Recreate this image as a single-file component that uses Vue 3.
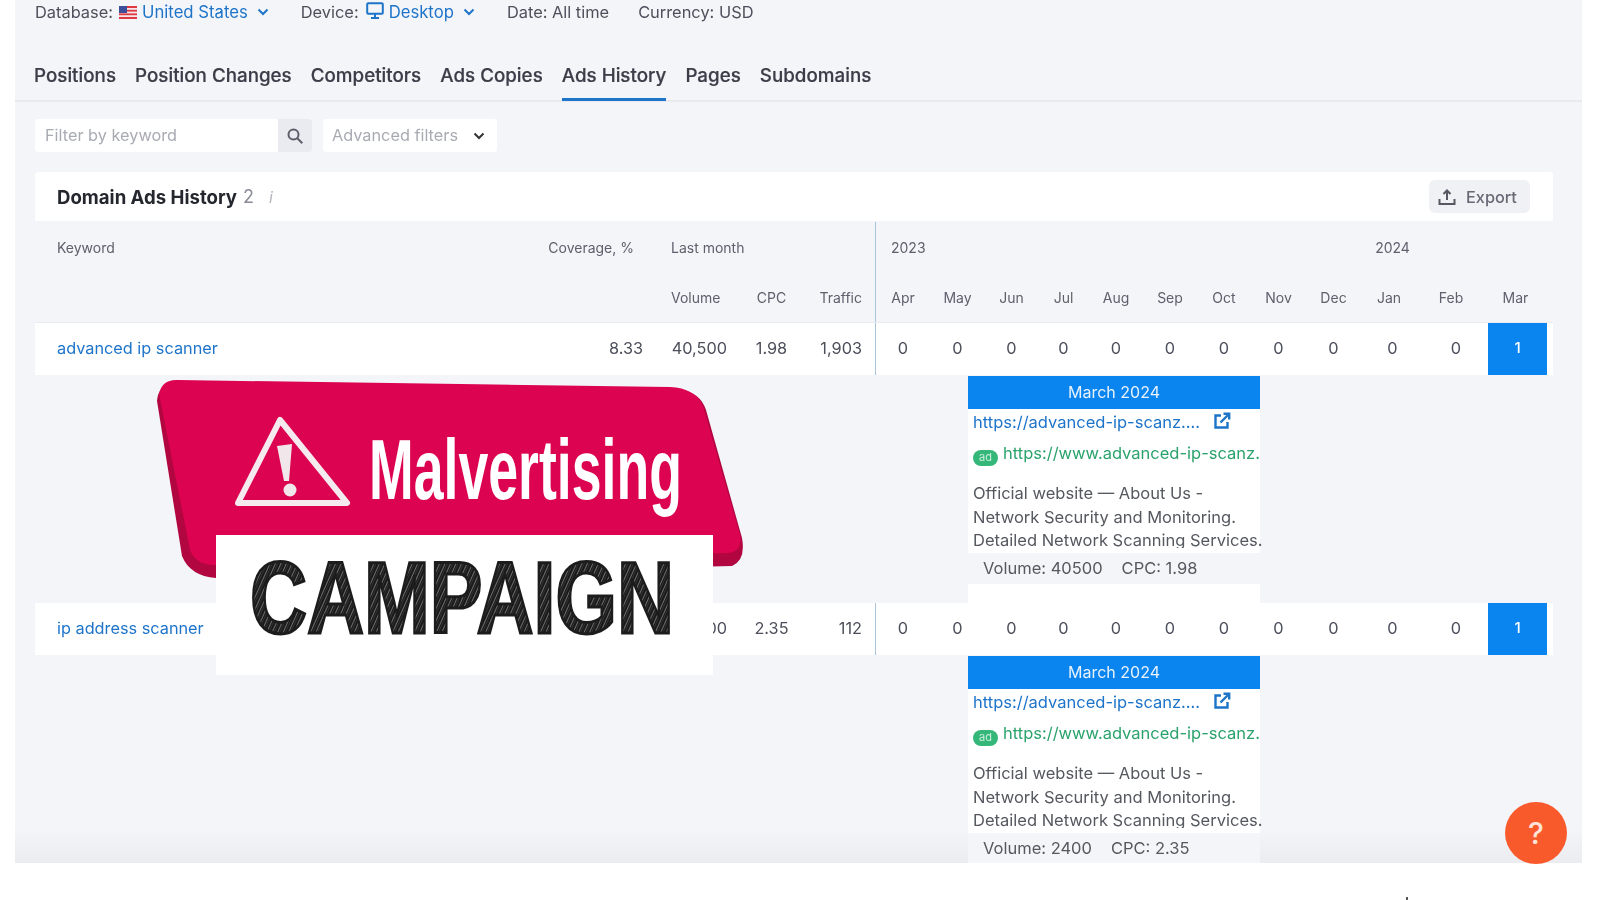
<script setup>
const tabs = ['Positions', 'Position Changes', 'Competitors', 'Ads Copies', 'Ads History', 'Pages', 'Subdomains']
const months = ['Apr', 'May', 'Jun', 'Jul', 'Aug', 'Sep', 'Oct', 'Nov', 'Dec', 'Jan', 'Feb', 'Mar']
const rows = [
  { kw: 'advanced ip scanner', cov: '8.33', vol: '40,500', cpc: '1.98', tr: '1,903', volume: '40500', cpcRaw: '1.98', gap: 'tall' },
  { kw: 'ip address scanner', cov: '', vol: '2,400', cpc: '2.35', tr: '112', volume: '2400', cpcRaw: '2.35', gap: 'short' }
]
</script>

<template>
  <div class="page">
    <main class="panel">
      <header class="meta">
        <span>Database:</span>
        <svg class="flag" viewBox="0 0 18 13">
          <rect width="18" height="13" fill="#e0393e" />
          <rect y="2" width="18" height="1.8" fill="#f4e6ea" />
          <rect y="5.6" width="18" height="1.8" fill="#f4e6ea" />
          <rect y="9.2" width="18" height="1.8" fill="#f4e6ea" />
          <rect width="8" height="7" fill="#3d4f9a" />
        </svg>
        <a class="link">United States</a>
        <svg class="chev" viewBox="0 0 12 8"><path d="M1.5 1.5 6 6l4.5-4.5" /></svg>
        <span class="m-device">Device:</span>
        <svg class="monitor" viewBox="0 0 18 18">
          <rect x="1.2" y="1.2" width="15.6" height="10.6" rx="1" />
          <path d="M9 12v3M5 16h8" />
        </svg>
        <a class="link">Desktop</a>
        <svg class="chev" viewBox="0 0 12 8"><path d="M1.5 1.5 6 6l4.5-4.5" /></svg>
        <span class="m-date">Date: All time</span>
        <span class="m-cur">Currency: USD</span>
      </header>

      <nav class="tabs">
        <a v-for="t in tabs" :key="t" class="tab" :class="{ active: t === 'Ads History' }">{{ t }}</a>
      </nav>

      <section class="filters">
        <div class="search">
          <span class="ph">Filter by keyword</span>
          <span class="search-btn">
            <svg viewBox="0 0 18 18"><circle cx="7.5" cy="7.5" r="5" /><path d="m11.3 11.3 5 5" /></svg>
          </span>
        </div>
        <div class="adv">
          <span class="ph">Advanced filters</span>
          <svg class="chev dark" viewBox="0 0 12 8"><path d="M1.5 1.5 6 6l4.5-4.5" /></svg>
        </div>
      </section>

      <section class="card-head">
        <h2>Domain Ads History</h2>
        <span class="count">2</span>
        <span class="info">i</span>
        <button class="export">
          <svg viewBox="0 0 18 18"><path d="M9 12V2.5M5.5 6 9 2.5 12.5 6M1.5 11v5h15v-5" /></svg>
          Export
        </button>
      </section>

      <div class="grid head top">
        <div class="pl">Keyword</div>
        <div class="cov-h">Coverage, %</div>
        <div class="last">Last month</div>
        <div></div>
        <div></div>
        <div class="first year">2023</div>
        <div></div><div></div><div></div><div></div><div></div><div></div><div></div><div></div>
        <div class="ctr">2024</div>
      </div>
      <div class="grid head sub">
        <div></div>
        <div></div>
        <div class="last">Volume</div>
        <div class="ctr">CPC</div>
        <div class="tr">Traffic</div>
        <div v-for="(m, i) in months" :key="m" class="ctr" :class="['m-' + m, { first: i === 0 }]">{{ m }}</div>
      </div>

      <template v-for="r in rows" :key="r.kw">
        <div class="grid data">
          <a class="kw">{{ r.kw }}</a>
          <div class="cov">{{ r.cov }}</div>
          <div class="vol">{{ r.vol }}</div>
          <div class="ctr">{{ r.cpc }}</div>
          <div class="tr">{{ r.tr }}</div>
          <div v-for="(m, i) in months" :key="m" class="ctr" :class="{ first: i === 0, hit: i === 11 }">{{ i === 11 ? 1 : 0 }}</div>
        </div>
        <div class="detail" :class="r.gap">
          <article class="pop">
            <div class="pop-head">March 2024</div>
            <div class="pop-url">
              <a class="link">https://advanced-ip-scanz....</a>
              <svg viewBox="0 0 18 18"><path d="M8 3.5H2.5v12h12V10M7.5 10.5 16 2M10.5 1.8H16.2V7.5" /></svg>
            </div>
            <div class="pop-ad">
              <span class="pill">ad</span>
              <span class="green">https://www.advanced-ip-scanz.</span>
            </div>
            <div class="desc">
              <div>Official website — About Us -</div>
              <div>Network Security and Monitoring.</div>
              <div>Detailed Network Scanning Services.</div>
            </div>
            <div class="stats">
              <span>Volume: {{ r.volume }}</span>
              <span>CPC: {{ r.cpcRaw }}</span>
            </div>
          </article>
        </div>
      </template>

      <svg class="banner" viewBox="0 0 610 320" aria-label="Malvertising campaign">
        <defs>
          <pattern id="hatch" width="5" height="5" patternUnits="userSpaceOnUse" patternTransform="rotate(24)">
            <rect width="5" height="5" fill="#1a1a1a" />
            <rect x="1" width="0.9" height="5" fill="#777" />
            <rect x="3.4" width="0.5" height="5" fill="#4a4a4a" />
          </pattern>
        </defs>
        <path class="red-edge" d="M17 41Q18 25 34 24L540 30Q560 32 566 50L602 178Q606 200 592 206L76 218Q50 216 42 196Z" />
        <path class="red" d="M19 34Q22 19 38 20L530 27Q555 28 563 46L600 175Q603 190 590 193L74 205Q56 205 50 190Z" />
        <path class="tri" d="M140 60 207 143H98Z" />
        <path class="bang" d="M137 86 152 84 149 121 144 121Z" />
        <circle class="bang" cx="150" cy="130" r="6.5" />
        <text class="malv" x="229" y="139" textLength="313" lengthAdjust="spacingAndGlyphs">Malvertising</text>
        <rect class="white" x="76" y="175" width="497" height="140" />
        <text class="camp" x="110" y="273" textLength="424" lengthAdjust="spacingAndGlyphs">CAMPAIGN</text>
      </svg>
    </main>

    <button class="help">?</button>
    <i class="speck"></i>
  </div>
</template>

<style>
body { margin: 0; background: #fff; }
</style>

<style scoped>
.page {
  position: relative;
  width: 1600px;
  height: 900px;
  overflow: hidden;
  background: #fff;
  font-family: Inter, "Liberation Sans", sans-serif;
  color: #3b3e48;
}
.panel {
  position: relative;
  box-sizing: border-box;
  margin-left: 15px;
  width: 1567px;
  height: 863px;
  padding-left: 20px;
  overflow: hidden;
  background: linear-gradient(#f3f5f9 96%, #ebecef);
  filter: blur(0.45px);
}
.meta {
  display: flex;
  align-items: center;
  height: 24px;
  font-size: 16.4px;
  color: #4d505b;
}
.link { color: #1d74c9; font-size: 16.7px; }
.flag { width: 18px; height: 13px; margin: 0 5px 0 6px; }
.chev { width: 12px; height: 8px; margin-left: 9px; fill: none; stroke: #1d74c9; stroke-width: 2; }
.chev.dark { stroke: #333; margin-left: 0; }
.monitor { width: 18px; height: 18px; margin: -3px 5px 0 7px; fill: none; stroke: #1d74c9; stroke-width: 2; }
.m-device { margin-left: 32px; }
.m-date { margin-left: 32px; }
.m-cur { margin-left: 29px; }

.tabs {
  display: flex;
  gap: 19px;
  height: 78px;
  margin-left: -20px;
  padding-left: 19px;
  border-bottom: 2px solid #e8eaef;
  box-sizing: border-box;
  align-items: flex-end;
  white-space: nowrap;
}
.tab {
  display: block;
  height: 39px;
  box-sizing: border-box;
  font-size: 18.8px;
  font-weight: 500;
  line-height: 30px;
  color: #3b3e48;
  -webkit-text-stroke: 0.2px #3b3e48;
}
.active { border-bottom: 3px solid #1d74c9; margin-bottom: -1px; height: 40px; }

.filters { display: flex; gap: 11px; margin-top: 17px; height: 33px; }
.search { display: flex; width: 277px; background: #fff; border-radius: 3px; }
.ph { font-size: 16.3px; color: #a9abb3; line-height: 33px; white-space: nowrap; }
.search .ph { flex: 1; padding-left: 10px; }
.search-btn {
  display: flex;
  align-items: center;
  justify-content: center;
  width: 34px;
  background: #e9ebf0;
  border-radius: 0 3px 3px 0;
}
.search-btn svg { width: 18px; height: 18px; fill: none; stroke: #5d606b; stroke-width: 2; }
.adv {
  display: flex;
  align-items: center;
  gap: 15px;
  width: 174px;
  box-sizing: border-box;
  padding-left: 9px;
  background: #fff;
  border-radius: 3px;
}

.card-head {
  display: flex;
  align-items: center;
  box-sizing: border-box;
  width: 1518px;
  height: 49px;
  margin-top: 20px;
  padding: 0 23px 0 22px;
  background: #fff;
  border-radius: 4px 4px 0 0;
}
.card-head h2 { margin: 0; font-size: 18.6px; font-weight: 700; color: #25272e; white-space: nowrap; }
.count { margin-left: 6px; font-size: 18px; color: #8a8d97; }
.info { margin-left: 15px; font-size: 16px; color: #b5b7be; font-style: italic; }
.export {
  display: flex;
  align-items: center;
  gap: 10px;
  margin-left: auto;
  box-sizing: border-box;
  width: 101px;
  height: 33px;
  padding: 0 0 0 9px;
  border: 0;
  border-radius: 6px;
  background: #f0f1f5;
  font: 500 16.3px Inter, "Liberation Sans", sans-serif;
  color: #676a75;
}
.export svg { width: 18px; height: 18px; fill: none; stroke: #555862; stroke-width: 2; }

.grid {
  display: grid;
  width: 1518px;
  grid-template-columns: 516px 102px 88px 61px 73px 55px 55px 53px 51px 54px 54px 54px 55px 55px 63px 64px 59px;
  align-items: stretch;
}
.grid > * { display: flex; align-items: center; box-sizing: border-box; }
.ctr { justify-content: center; }
.first { border-left: 1px solid #a9c3d9; }
.head { font-size: 14px; color: #5e616c; }
.top { height: 51px; padding-top: 1px; box-sizing: border-box; }
.sub { height: 50px; border-bottom: 1px solid #e9ebf0; }
.pl { padding-left: 22px; }
.cov-h { justify-content: flex-end; padding-right: 19px; white-space: nowrap; }
.last { padding-left: 18px; white-space: nowrap; }
.year { padding-left: 15px; }
.tr { justify-content: flex-end; padding-right: 13px; }
.m-Jan { padding-right: 7px; }
.m-Feb { padding-right: 10px; }
.m-Mar { padding-right: 4px; }

.data { height: 52px; background: #fff; font-size: 16.3px; color: #4d505b; }
.data > * { padding-bottom: 3px; }
.kw { padding-left: 22px; color: #1d74c9; }
.cov { justify-content: flex-end; padding-right: 10px; }
.vol { justify-content: flex-end; padding-right: 14px; }
.hit { background: #0a84ee; color: #fff; font-weight: 500; font-size: 15px; }

.detail { box-sizing: border-box; padding-left: 933px; overflow: hidden; }
.tall { height: 228px; }
.short { height: 209px; }
.pop { width: 292px; height: 228px; background: #fff; font-size: 16.5px; color: #55585f; }
.pop-head {
  height: 33px;
  margin-top: 1px;
  background: #0a84ee;
  color: #e8f2fb;
  font-size: 16px;
  line-height: 33px;
  text-align: center;
}
.pop-url { display: flex; align-items: center; gap: 13px; height: 25px; padding: 0 0 0 5px; white-space: nowrap; }
.pop-url .link { font-size: 16.5px; }
.pop-url svg { width: 18px; height: 18px; fill: none; stroke: #1d74c9; stroke-width: 2.4; margin-top: -2px; }
.pop-ad { display: flex; align-items: flex-start; height: 48px; box-sizing: border-box; padding: 8px 0 0 5px; overflow: hidden; white-space: nowrap; }
.pill {
  flex: none;
  width: 25px;
  height: 16px;
  margin: 8px 5px 0 0;
  border-radius: 8px;
  background: #35b779;
  color: #c9efdc;
  font-size: 11px;
  line-height: 15px;
  text-align: center;
}
.green { color: #2ba36c; line-height: 22px; }
.desc { height: 66px; padding-left: 5px; overflow-x: visible; overflow-y: clip; white-space: nowrap; line-height: 23.5px; }
.stats {
  display: flex;
  gap: 19px;
  height: 31px;
  margin-top: 5px;
  padding-left: 15px;
  background: #f3f5f9;
  color: #55585f;
  line-height: 31px;
}

.banner { position: absolute; left: 125px; top: 360px; width: 610px; height: 320px; overflow: visible; }
.red { fill: #dc0350; }
.red-edge { fill: #b1063f; }
.tri { fill: none; stroke: #f5eaee; stroke-width: 6; stroke-linejoin: round; }
.bang { fill: #f1e6ea; }
.malv { font-family: "Liberation Sans", sans-serif; font-size: 85px; font-weight: 700; fill: #fff; }
.white { fill: #fff; }
.camp {
  font-family: "Liberation Sans", sans-serif;
  font-size: 102px;
  font-weight: 700;
  fill: url(#hatch);
  stroke: #1c1c1c;
  stroke-width: 3px;
}

.help {
  position: absolute;
  left: 1505px;
  top: 802px;
  width: 62px;
  height: 62px;
  padding: 0;
  border: 0;
  border-radius: 50%;
  background: #f95a2c;
  color: #fde3d8;
  font: 500 30px Inter, "Liberation Sans", sans-serif;
}
.speck { position: absolute; left: 1406px; top: 897px; width: 2px; height: 3px; background: #555; }
</style>
